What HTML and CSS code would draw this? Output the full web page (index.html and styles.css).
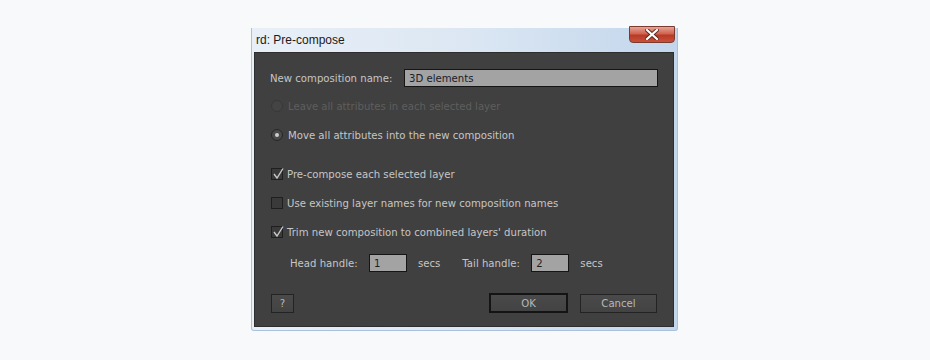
FILE: index.html
```html
<!DOCTYPE html>
<html lang="en">
<head>
    <meta charset="utf-8">
    <title>Pre-compose</title>
    <link rel="stylesheet" href="styles.css">
</head>
<body>
    <div class="window">
        <div class="titlebar">
            <span class="title">rd: Pre-compose</span>
            <button class="close-btn" aria-label="Close">
                <svg width="14" height="11" viewBox="0 0 14 11">
                    <path d="M2 1 L12 10 M12 1 L2 10" stroke="#5a2a22" stroke-width="4" stroke-linecap="square"/>
                    <path d="M2 1 L12 10 M12 1 L2 10" stroke="#ffffff" stroke-width="2.2" stroke-linecap="square"/>
                </svg>
            </button>
        </div>

        <div class="panel">
            <div class="row name-row">
                <label class="label">New composition name:</label>
                <div class="field name-field">3D elements</div>
            </div>

            <div class="row option disabled radio-first">
                <span class="radio"></span>
                <span>Leave all attributes in each selected layer</span>
            </div>

            <div class="row option radio-second">
                <span class="radio checked"></span>
                <span>Move all attributes into the new composition</span>
            </div>

            <div class="row option check-first">
                <span class="checkbox checked">
                    <svg width="12" height="12" viewBox="0 0 12 12"><path d="M2 6 L5 10 L11 0.5" fill="none" stroke="#c8c8c8" stroke-width="1.4"/></svg>
                </span>
                <span>Pre-compose each selected layer</span>
            </div>

            <div class="row option check-next">
                <span class="checkbox"></span>
                <span>Use existing layer names for new composition names</span>
            </div>

            <div class="row option check-next">
                <span class="checkbox checked">
                    <svg width="12" height="12" viewBox="0 0 12 12"><path d="M2 6 L5 10 L11 0.5" fill="none" stroke="#c8c8c8" stroke-width="1.4"/></svg>
                </span>
                <span>Trim new composition to combined layers' duration</span>
            </div>

            <div class="row handle-row">
                <span class="head-label">Head handle:</span>
                <div class="field small-field">1</div>
                <span class="secs">secs</span>
                <span class="tail-label">Tail handle:</span>
                <div class="field small-field">2</div>
                <span class="secs">secs</span>
            </div>

            <div class="row button-row">
                <button class="btn help-btn">?</button>
                <div class="spacer"></div>
                <button class="btn ok-btn">OK</button>
                <button class="btn cancel-btn">Cancel</button>
            </div>
        </div>
    </div>
</body>
</html>
```

FILE: styles.css
```css
body {
    margin: 0;
    background-color: #f8f9fb;
    font-family: "DejaVu Sans", Verdana, sans-serif;
    font-size: 10px;
}
.window {
    margin: 28px 0 0 251px;
    width: 427px;
    padding: 0 3px 3px 2px;
    box-sizing: border-box;
    background: linear-gradient(to right, #e8eff7 0%, #dce7f3 50%, #c2d6ec 100%);
    border: 1px solid #a9c1dc;
    border-top: none;
    border-radius: 0 0 3px 3px;
}
.titlebar {
    height: 24px;
    display: flex;
    align-items: flex-start;
    justify-content: space-between;
}
.title {
    font-family: "Liberation Sans", Arial, sans-serif;
    font-size: 12px;
    color: #1b1b1b;
    padding: 5px 0 0 2px;
}
.close-btn {
    width: 46px;
    height: 17px;
    margin-top: -2px;
    margin-right: -1px;
    border: 1px solid #7a3a30;
    border-radius: 0 0 4px 4px;
    background: linear-gradient(to bottom, #e5a496 0%, #d0634f 45%, #b83a25 55%, #c8513c 100%);
    display: flex;
    align-items: center;
    justify-content: center;
    padding: 0;
}
.panel {
    background-color: #404040;
    border: 1px solid #2e2e2e;
    height: 275px;
    box-sizing: border-box;
    padding: 15px 15px 0 15px;
    color: #c6c6c6;
    font-family: "DejaVu Sans", Verdana, sans-serif;
    font-size: 10.15px;
}
.row {
    display: flex;
    align-items: center;
    height: 20px;
}
.label {
    width: 134px;
    flex-shrink: 0;
}
.field {
    background-color: #a3a3a3;
    border: 1px solid #151515;
    height: 18px;
    box-sizing: border-box;
    color: #1c1c28;
    padding: 0 4px;
    display: flex;
    align-items: center;
}
.name-field {
    flex: 1;
}
.option {
    padding-left: 1px;
    gap: 4px;
}
.radio-first { margin-top: 8px; }
.radio-second { margin-top: 9px; }
.check-first { margin-top: 19px; }
.check-next { margin-top: 9px; }
.disabled {
    color: #5e5e5e;
}
.radio {
    width: 10px;
    height: 10px;
    border-radius: 50%;
    border: 1px solid #262626;
    background: #4a4a4a;
    display: flex;
    align-items: center;
    justify-content: center;
    margin-right: 1px;
}
.disabled .radio {
    border-color: #383838;
    background: #444444;
}
.radio.checked::after {
    content: "";
    width: 4px;
    height: 4px;
    border-radius: 50%;
    background: #cfcfcf;
}
.checkbox {
    width: 12px;
    height: 12px;
    box-sizing: border-box;
    border: 1px solid #1f1f1f;
    background: #3a3a3a;
    position: relative;
}
.checkbox svg {
    position: absolute;
    left: 0;
    top: -1px;
}
.handle-row {
    margin-top: 11px;
    padding-left: 20px;
}
.head-label {
    width: 79px;
}
.small-field {
    width: 38px;
}
.secs {
    margin-left: 11px;
}
.tail-label {
    margin-left: 22px;
    width: 69px;
}
.button-row {
    margin-top: 20px;
    padding: 0 1px;
}
.spacer {
    flex: 1;
}
.btn {
    height: 19px;
    box-sizing: border-box;
    background: linear-gradient(to bottom, #4a4a4a, #434343);
    border: 1px solid #232323;
    color: #b8b8b8;
    font-family: "DejaVu Sans", Verdana, sans-serif;
    font-size: 10.15px;
    padding: 0;
}
.help-btn {
    width: 23px;
}
.ok-btn {
    width: 79px;
    height: 20px;
    border: 2px solid #141414;
}
.cancel-btn {
    width: 77px;
    margin-left: 12px;
}
```
